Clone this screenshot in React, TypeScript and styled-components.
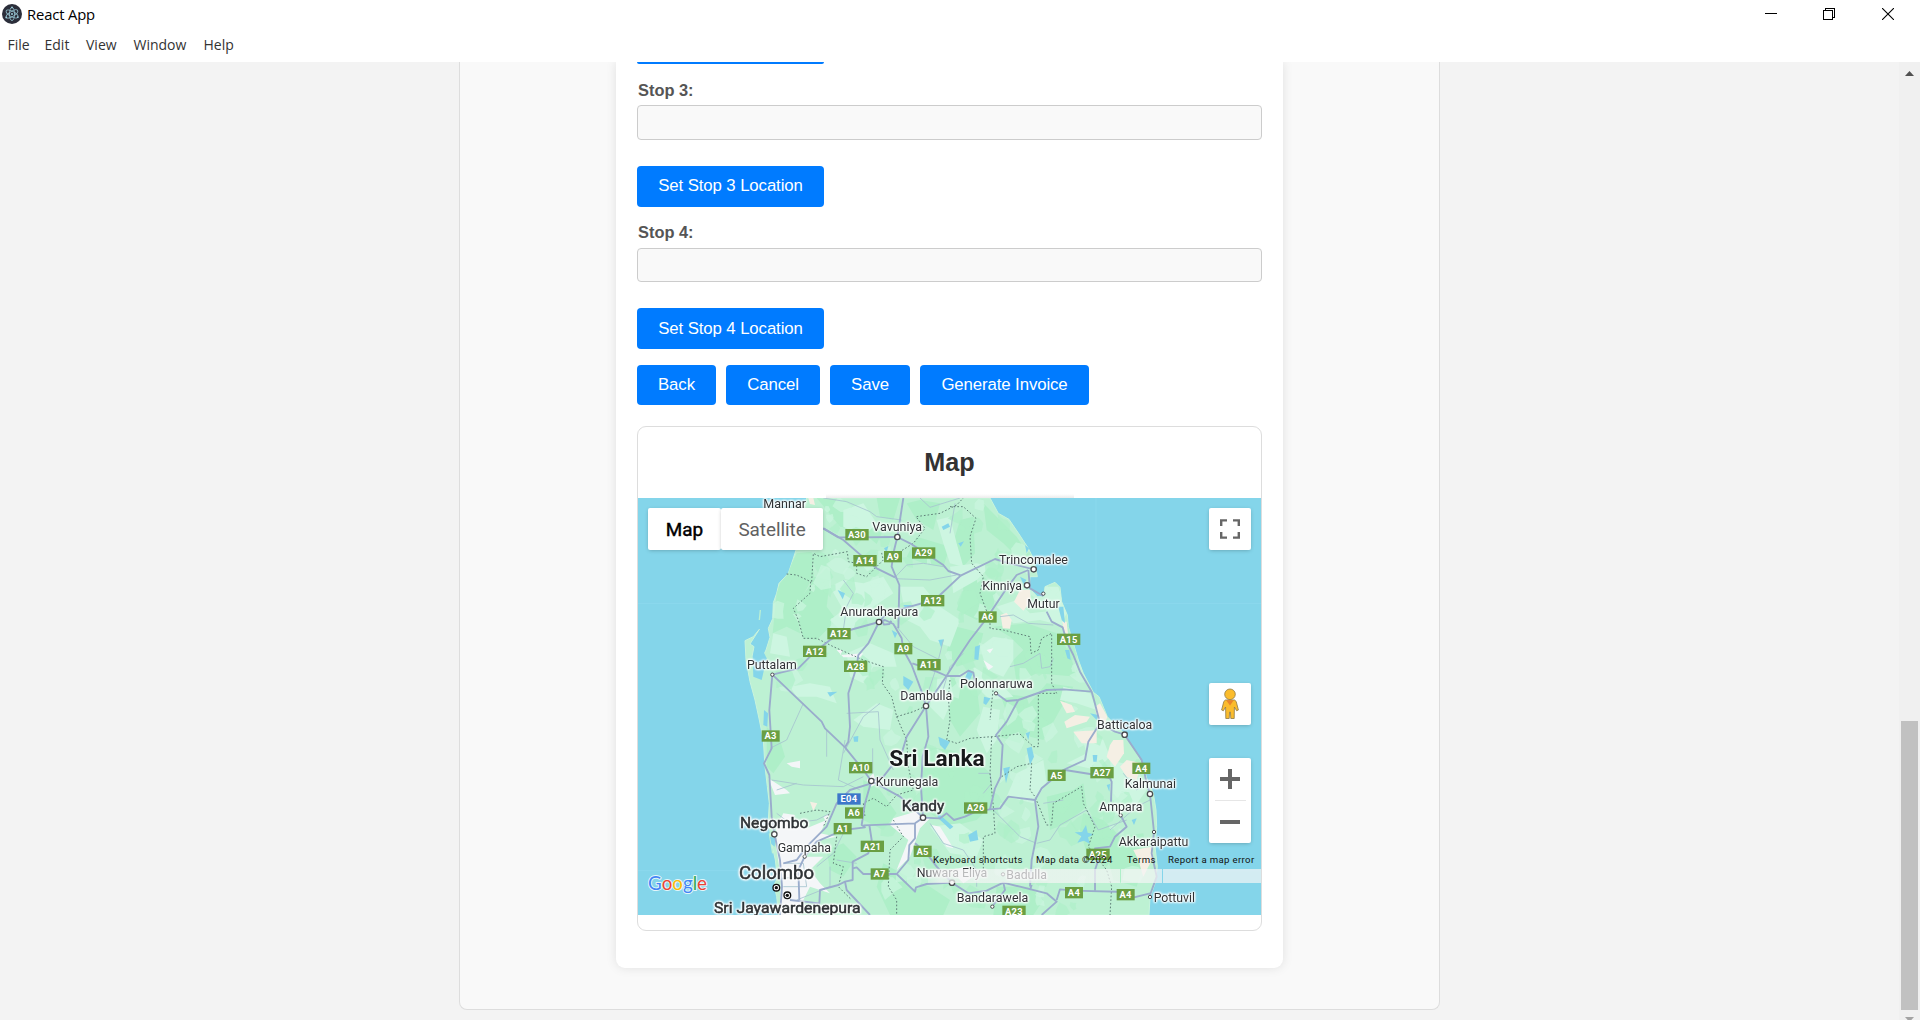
import React from "react";
import styled, { createGlobalStyle } from "styled-components";

const GlobalStyle = createGlobalStyle`
  * { box-sizing: border-box; }
  html, body { margin: 0; padding: 0; overflow: hidden; }
  body { font-family: "Liberation Sans", Arial, sans-serif; background: #fff; }
`;

/* ---------- window chrome ---------- */
const Window = styled.div`
  width: 1920px;
  height: 1020px;
  display: flex;
  flex-direction: column;
  overflow: hidden;
  background: #fff;
`;

const TitleBar = styled.header`
  height: 30px;
  display: flex;
  align-items: flex-start;
  justify-content: space-between;
  padding-left: 2px;
  font-family: "Open Sans", "Noto Sans", sans-serif;
`;

const TitleGroup = styled.div`
  display: flex;
  align-items: flex-start;
  gap: 5px;
  font-size: 14.8px;
  line-height: 28px;
  letter-spacing: -0.15px;
  color: #000;
  svg { display: block; margin-top: 4px; }
`;

const WindowButtons = styled.div`
  display: flex;
  height: 28px;
  padding-right: 3px;
`;

const WindowButton = styled.div`
  width: 58.5px;
  display: grid;
  place-items: center;
`;

const MenuBar = styled.nav`
  height: 32px;
  display: flex;
  gap: 15.5px;
  padding-left: 7.5px;
  font-family: "Open Sans", "Noto Sans", sans-serif;
  font-size: 14px;
  line-height: 29px;
  color: #333;
`;

const MenuItem = styled.span<{ $w: number }>`
  width: ${(p) => p.$w}px;
  white-space: nowrap;
`;

const Viewport = styled.div`
  flex: 1;
  min-height: 0;
  display: flex;
  background: #f3f3f3;
`;

const Page = styled.main`
  flex: 1;
  display: flex;
  justify-content: center;
  overflow: hidden;
`;

const Scrollbar = styled.aside`
  width: 21px;
  background: #f0f0f0;
  display: flex;
  flex-direction: column;
  align-items: center;
  overflow: hidden;
`;

const ScrollCap = styled.div<{ $h: number; $pad: number }>`
  height: ${(p) => p.$h}px;
  padding-top: ${(p) => p.$pad}px;
  flex: none;
  svg { display: block; }
`;

const ScrollThumb = styled.div`
  width: 17px;
  height: 289px;
  flex: none;
  background: #c1c1c1;
`;

/* ---------- form ---------- */
const Container = styled.div`
  width: 981px;
  height: 948px;
  border: 1px solid #ddd;
  border-top: 0;
  border-radius: 0 0 8px 8px;
  background: #f9f9f9;
  display: flex;
  justify-content: center;
  align-items: flex-start;
`;

const Card = styled.section`
  width: 667px;
  height: 906px;
  padding: 0 21px;
  background: #fff;
  border-radius: 0 0 9px 9px;
  box-shadow: 0 0 11px rgba(0, 0, 0, 0.1);
  display: flex;
  flex-direction: column;
  align-items: flex-start;
`;

const Button = styled.button<{ $w: number; $h?: number; $drop?: boolean }>`
  width: ${(p) => p.$w}px;
  height: ${(p) => p.$h ?? 41}px;
  flex: none;
  border: 0;
  border-radius: 4px;
  padding: 0 0 ${(p) => (p.$drop ? 0 : 2)}px;
  background: #007bff;
  color: #fff;
  font: 16.8px "Liberation Sans", Arial, sans-serif;
  letter-spacing: -0.1px;
  white-space: nowrap;
`;

const ButtonEdge = styled.div`
  width: 187px;
  height: 2px;
  flex: none;
  border-radius: 0 0 4px 4px;
  background: #007bff;
`;

const Field = styled.div<{ $top: number }>`
  width: 100%;
  margin-top: ${(p) => p.$top}px;
  display: flex;
  flex-direction: column;
`;

const Label = styled.label<{ $lh?: number }>`
  height: 26px;
  padding-left: 1px;
  font-weight: bold;
  font-size: 16.4px;
  line-height: ${(p) => p.$lh ?? 20}px;
  color: #555;
`;

const Input = styled.input<{ $h: number }>`
  width: 100%;
  height: ${(p) => p.$h}px;
  margin-bottom: 26px;
  border: 1px solid #ccc;
  border-radius: 4px;
  background: #f9f9f9;
  outline: none;
`;

const Actions = styled.div`
  display: flex;
  gap: 10px;
  margin-top: 16px;
`;

const MapCard = styled.div`
  width: 625px;
  height: 505px;
  margin-top: 21px;
  border: 1px solid #ddd;
  border-radius: 9px;
  overflow: hidden;
  display: flex;
  flex-direction: column;
`;

const MapTitle = styled.h2`
  height: 71px;
  flex: none;
  margin: 0;
  text-align: center;
  font-size: 25.2px;
  line-height: 71px;
  color: #333;
`;

const MapArea = styled.div`
  position: relative;
  width: 623px;
  height: 417px;
  overflow: hidden;
  background: #84d5ea;
  > svg { display: block; }
`;

const TitleShadow = styled.div`
  height: 4px;
  width: 248px;
  margin: -4px auto 0;
  flex: none;
  background: linear-gradient(rgba(0, 0, 0, 0), rgba(0, 0, 0, 0.08));
`;

/* ---------- controls lying over the map ---------- */
const MapControl = styled.div<{ $x: number; $y: number; $h?: number }>`
  position: absolute;
  left: ${(p) => p.$x}px;
  top: ${(p) => p.$y}px;
  width: 42px;
  height: ${(p) => p.$h ?? 42}px;
  background: #fff;
  border-radius: 2px;
  box-shadow: 0 1px 4px -1px rgba(0, 0, 0, 0.3);
  display: flex;
  flex-direction: column;
  align-items: center;
  justify-content: center;
`;

const TypeSwitch = styled.div`
  position: absolute;
  left: 10px;
  top: 10px;
  display: flex;
`;

const TypeButton = styled.div<{ $w: number; $active?: boolean }>`
  width: ${(p) => p.$w}px;
  height: 42px;
  background: #fff;
  border-radius: 2px;
  box-shadow: 0 1px 4px -1px rgba(0, 0, 0, 0.3);
  text-align: center;
  font: 18.9px/43px Roboto, sans-serif;
  letter-spacing: ${(p) => (p.$active ? 0.1 : -0.05)}px;
  -webkit-text-stroke: ${(p) => (p.$active ? "0.45px #000" : "0")};
  color: ${(p) => (p.$active ? "#000" : "#616161")};
`;

const ZoomCell = styled.div`
  height: 42px;
  display: grid;
  place-items: center;
`;

const ZoomDivider = styled.div`
  width: 31px;
  height: 1px;
  background: #e6e6e6;
`;

const FooterBand = styled.div`
  position: absolute;
  right: 0;
  top: 371px;
  height: 14px;
  display: flex;
  gap: 1px;
`;

const BandPart = styled.div<{ $w: number; $fade?: boolean }>`
  width: ${(p) => p.$w}px;
  background: ${(p) =>
    p.$fade
      ? "linear-gradient(90deg, rgba(245,245,245,.35), rgba(245,245,245,.7) 12px)"
      : "rgba(245,245,245,.7)"};
`;

const Credits = styled.div`
  position: absolute;
  right: 6px;
  top: 355px;
  display: flex;
  gap: 13px;
  font: 9.6px/14px Roboto, sans-serif;
  color: #111;
`;

const Credit = styled.span<{ $w: number }>`
  width: ${(p) => p.$w}px;
  white-space: nowrap;
  letter-spacing: 0.36px;
`;

/* ---------- map data, in a 1869 x 1251 chart space ---------- */
const LAND =
  "M530 234 L522 262 L498 390 L490 415 L475 460 L447 490 L440 520 L430 548 L428 596 L415 625 L420 652 L408 690 L398 712 L380 722 L366 710 L372 680 L360 672 L388 628 L370 650 L345 662 L348 720 L360 785 L375 840 L388 900 L400 960 L405 1040 L412 1100 L418 1150 L415 1200 L425 1270 L436 1320 L442 1375 L432 1395 L440 1430 L446 1485 L1557 1485 L1560 1432 L1575 1390 L1582 1340 L1575 1280 L1580 1220 L1578 1170 L1570 1120 L1552 1080 L1540 1040 L1520 1000 L1490 945 L1465 925 L1432 890 L1407 830 L1390 817 L1360 760 L1345 720 L1330 670 L1315 620 L1312 585 L1295 545 L1290 502 L1275 487 L1245 500 L1242 530 L1222 530 L1198 505 L1200 470 L1222 470 L1212 420 L1195 385 L1167 342 L1137 298 L1105 280 L1080 234 Z";

const DARK = [
  "M560 234 L640 240 L700 285 L760 330 L740 372 L690 330 L630 320 L590 270Z",
  "M500 400 L545 395 L552 470 L600 480 L590 560 L620 600 L560 660 L520 655 L505 600 L490 560 L530 510 L545 490 L470 462Z",
  "M450 490 L475 460 L540 488 L500 560 L510 640 L470 620 L428 640 L440 520Z",
  "M740 234 L810 234 L790 300 L750 290Z",
  "M830 250 L870 240 L930 250 L910 330 L860 300Z",
  "M990 300 L1030 290 L1035 400 L1000 440 L960 400Z",
  "M1060 250 L1110 300 L1160 350 L1200 410 L1150 400 L1120 370 L1070 330Z",
  "M860 350 L960 380 L940 440 L880 430 L830 410Z",
  "M990 460 L1060 470 L1100 500 L1090 560 L1040 600 L980 570 L1000 510Z",
  "M1090 620 L1190 610 L1280 640 L1320 700 L1340 770 L1220 760 L1160 790 L1150 720 L1180 690 L1140 650Z",
  "M980 620 L1060 640 L1040 720 L980 740 L950 690Z",
  "M960 770 L1040 800 L1050 880 L990 950 L960 900Z",
  "M880 980 L960 990 L1030 1010 L1080 1060 L1090 1150 L1040 1200 L960 1220 L900 1180 L870 1120 L880 1050Z",
  "M1110 820 L1190 830 L1210 900 L1170 970 L1110 950 L1130 880Z",
  "M1190 860 L1250 790 L1330 800 L1290 870 L1240 960 L1200 950Z",
  "M1250 1130 L1330 1110 L1360 1090 L1370 1160 L1310 1210 L1260 1230Z",
  "M1360 1180 L1420 1200 L1480 1260 L1430 1340 L1370 1300 L1350 1230Z",
  "M1380 1260 L1540 1240 L1550 1300 L1520 1400 L1450 1380 L1430 1300Z",
  "M1100 1400 L1200 1400 L1240 1440 L1210 1485 L1090 1485Z",
  "M760 1330 L850 1380 L900 1400 L960 1440 L940 1485 L780 1485 L740 1400Z",
  "M410 920 L450 960 L465 1010 L430 1060 L410 1040Z",
  "M700 1080 L750 1110 L800 1180 L760 1230 L700 1200Z",
  "M590 1290 L640 1270 L680 1310 L640 1370 L600 1350Z",
];

const LIGHT = [
  "M640 270 L700 250 L740 310 L700 350 L640 320Z",
  "M600 500 L640 480 L700 490 L760 470 L790 520 L730 560 L690 620 L640 640 L600 600 L640 570Z",
  "M810 500 L880 500 L930 560 L990 600 L960 680 L900 660 L870 620 L830 600Z",
  "M920 300 L960 290 L980 370 L1000 440 L960 430 L940 370Z",
  "M960 440 L1040 430 L1080 440 L1040 480 L970 520Z",
  "M650 700 L720 670 L790 700 L800 740 L730 740 L700 790 L660 770Z",
  "M480 800 L540 790 L600 800 L620 850 L560 830 L500 830Z",
  "M670 900 L740 850 L790 870 L780 930 L700 920Z",
  "M1050 680 L1090 650 L1150 660 L1150 720 L1120 770 L1070 750Z",
  "M1100 560 L1160 540 L1200 580 L1290 570 L1310 620 L1230 600 L1150 610Z",
  "M1240 500 L1285 500 L1310 580 L1290 620 L1250 580Z",
  "M1030 740 L1110 790 L1150 830 L1080 840 L1040 800Z",
  "M1300 800 L1380 820 L1400 870 L1340 850 L1290 840Z",
  "M1350 930 L1420 960 L1440 1010 L1400 1050 L1310 1030 L1370 1000Z",
  "M1160 1060 L1240 1020 L1250 1090 L1210 1150 L1130 1130Z",
  "M910 780 L960 770 L970 830 L940 900 L900 860Z",
  "M1440 1020 L1520 1040 L1550 1110 L1500 1180 L1450 1120Z",
  "M1060 860 L1110 870 L1100 960 L1070 1000 L1040 930Z",
  "M900 1220 L990 1210 L1060 1260 L1040 1310 L960 1300Z",
  "M430 640 L470 650 L480 710 L420 700Z",
];

const SAND = [
  "M1290 842 L1325 855 L1335 875 L1310 880Z",
  "M1303 905 L1335 885 L1380 890 L1370 905 L1310 925Z",
  "M1330 935 L1400 930 L1400 970 L1355 970Z",
  "M1440 975 L1450 960 L1480 960 L1482 1000 L1455 1040 L1430 1010Z",
  "M1470 1040 L1490 1020 L1535 1030 L1520 1080 L1490 1070Z",
  "M1395 860 L1410 850 L1432 890 L1425 910 L1400 890Z",
  "M1152 545 L1170 510 L1200 510 L1202 545 L1180 572Z",
  "M1112 585 L1130 578 L1145 600 L1140 626 L1118 625Z",
  "M1297 605 L1310 605 L1315 650 L1300 630Z",
  "M1510 1290 L1565 1280 L1570 1310 L1540 1370 L1525 1320Z",
  "M535 234 L550 234 L555 255 L540 252Z",
  "M540 1145 L562 1150 L550 1172Z",
];

const URBAN = [
  "M438 1225 L460 1180 L495 1185 L475 1215 L530 1225 L590 1200 L570 1240 L620 1250 L570 1260 L520 1310 L580 1310 L540 1350 L570 1390 L600 1420 L540 1400 L520 1440 L500 1485 L450 1485 L452 1370 L440 1290Z",
  "M790 1195 L855 1175 L900 1195 L870 1225 L840 1310 L800 1350 L835 1260 L780 1215Z",
  "M415 1075 L470 1110 L480 1120 L435 1125Z",
  "M710 1080 L730 1060 L740 1090 L725 1100Z",
  "M470 1030 L510 1022 L510 1045 L485 1040Z",
  "M580 1190 L600 1180 L590 1210Z",
  "M680 1180 L700 1170 L695 1200Z",
  "M620 690 L640 690 L630 705 L700 700 L690 712 L640 712Z",
  "M905 1215 L930 1220 L970 1285 L950 1280Z",
  "M1060 720 L1090 740 L1075 750Z M1070 690 L1090 685 L1080 700Z",
  "M960 1350 L1010 1340 L1030 1370 L1000 1390Z",
];

const WATER = [
  "M368 712 L398 690 L410 715 L395 780 L370 770Z",
  "M402 870 L414 880 L412 920 L400 915Z",
  "M623 510 L645 520 L638 538 Z",
  "M820 555 L845 555 L842 562 L826 564Z",
  "M785 630 L802 640 L795 655Z",
  "M925 660 L942 658 L934 684Z",
  "M820 768 L850 785 L835 810 L820 795Z",
  "M592 817 L622 815 L600 830Z",
  "M670 950 L685 948 L684 965 L672 965Z",
  "M925 950 L960 965 L945 990 L930 975Z",
  "M935 320 L955 310 L960 320 L940 330Z",
  "M985 370 L1002 364 L992 380Z",
  "M762 385 L775 378 L770 398Z",
  "M1062 830 L1082 835 L1068 855 L1060 850Z",
  "M1035 680 L1050 675 L1045 720 L1033 718Z",
  "M1015 750 L1030 755 L1020 780 L1005 775Z",
  "M1187 940 L1200 935 L1195 960Z",
  "M1190 985 L1205 980 L1212 1010 L1200 1035 L1195 1010Z",
  "M1120 1045 L1140 1040 L1128 1090Z",
  "M1430 1095 L1440 1092 L1438 1115Z",
  "M1388 1005 L1402 1005 L1400 1025 L1390 1025Z",
  "M1334 1237 L1356 1236 L1368 1215 L1373 1238 L1392 1243 L1374 1252 L1380 1272 L1362 1262 L1342 1268 L1354 1249Z",
  "M1015 1245 L1040 1230 L1045 1260 L1020 1265Z",
  "M920 1175 L970 1220 L960 1228 L925 1195Z",
  "M1170 470 L1190 480 L1180 492Z",
  "M1485 950 L1500 945 L1530 1000 L1520 1000Z",
  "M1380 880 L1405 885 L1400 900Z",
  "M420 1250 L436 1255 L434 1280 L424 1272Z",
  "M1185 375 L1197 385 L1190 400Z",
  "M1285 560 L1300 560 L1305 610 L1295 600Z",
  "M1305 690 L1318 690 L1322 720 L1312 715Z",
  "M1505 1200 L1520 1195 L1512 1215Z",
];

const ROADS = [
  "M580 325 L625 352 L680 352 L802 351",
  "M820 234 L802 351 L790 400 L785 440 L808 495 L805 625",
  "M580 325 L640 360 L700 412 L740 445 L795 472",
  "M802 351 L840 370 L880 395 L940 435 L955 453 L992 466",
  "M992 467 L930 525 L900 543 L830 563 L770 580 L747 606",
  "M992 467 L1095 417 L1120 425 L1211 448",
  "M1195 450 L1160 465 L1130 505 L1070 595 L1020 660 L980 720 L945 775 L888 858",
  "M747 606 L765 600 L790 612 L815 655 L820 690 L845 735 L875 815 L888 858",
  "M755 600 L762 614 L778 612 L784 602",
  "M847 730 L920 755 L950 768 L990 768 L1015 752 L1030 758 L1035 785",
  "M1098 820 L1130 843 L1165 840 L1250 810 L1300 808 L1385 815",
  "M1195 450 L1200 505 L1240 528 M1250 575 L1265 605 L1298 622 L1310 665 L1330 705 L1350 755 L1385 815 L1392 840 L1410 910",
  "M747 606 L660 630 L600 660 L555 695 L505 745 L427 764",
  "M747 606 L715 670 L685 705 L680 740 L655 820 L660 920 L655 965 L645 982",
  "M427 764 L575 905 L585 925 L645 982 L700 1050 L724 1083",
  "M427 764 L418 870 L425 985 L402 1030 L418 1065 L425 1190 L433 1240 L450 1320 L456 1400 L450 1485",
  "M724 1083 L760 1070 L815 1000 L830 950 L888 858 L895 950 L878 1010 L873 1100 L879 1193",
  "M724 1083 L810 1130 L850 1165 L879 1193",
  "M724 1090 L660 1110 L620 1150 L590 1220 L530 1280 L500 1320 L460 1330",
  "M724 1083 L705 1150 L695 1215 L705 1222 L640 1230 L560 1265 L524 1310 L505 1350 L508 1440",
  "M700 1216 L855 1210 L879 1193 M855 1210 L855 1255 L838 1275 L835 1320 L800 1362",
  "M718 1215 L725 1260 L715 1300 L668 1325 L668 1380 L645 1385 L625 1395 L570 1410 L568 1450 L480 1440",
  "M645 1385 L650 1410 L720 1485",
  "M668 1345 L680 1342 L700 1362 L800 1362 L855 1415 L858 1402 L890 1392 L966 1388 L1015 1420 L1070 1412 L1120 1388 L1170 1400 L1250 1420 L1280 1445 L1235 1485",
  "M855 1270 L890 1300 L920 1340 L966 1388",
  "M1280 1440 L1290 1408 L1332 1412 L1487 1416 M1500 1435 L1560 1420",
  "M1120 1388 L1125 1410 L1090 1455 M1205 1395 L1200 1410",
  "M879 1193 L930 1195 L950 1180 L972 1200 L1005 1190 L1037 1175 L1080 1168 L1110 1165 L1135 1130 L1215 1140 L1235 1105 L1300 1050 L1365 1020 L1375 965 L1410 910",
  "M1305 1050 L1380 1062 L1440 1075 L1445 1085 L1443 1145",
  "M1080 1168 L1095 1105 L1112 1070 L1118 975 L1098 945 L1130 905 L1165 840",
  "M1215 1140 L1225 1220 L1205 1320 L1200 1400",
  "M1410 910 L1455 935 L1484 944 L1535 1020 L1550 1090 L1560 1122 L1572 1236 L1565 1300 L1580 1370 L1560 1425",
  "M1472 1186 L1490 1220 L1455 1250 L1440 1280 L1395 1285 L1405 1320 L1395 1350 L1395 1412",
];

const MINOR = [
  "M580 234 L650 245 L720 275 L740 290 L815 300",
  "M795 472 L830 435 L880 430 L940 440 L955 453 M795 476 L900 480 L980 465",
  "M640 480 L670 520 L650 560 L640 630",
  "M800 620 L850 680 L930 720",
  "M940 660 L920 740 L890 830",
  "M520 850 L470 960 L420 985",
  "M590 930 L590 1010 M728 985 L728 1060",
  "M425 1080 L520 1095 L640 1100 L700 1070",
  "M645 960 L625 1080 L690 1110",
  "M650 880 L745 875 L750 960 L790 1050",
  "M440 1110 L500 1090 M440 1180 L480 1210 L560 1200 L600 1180",
  "M960 340 L975 250 M870 234 L900 262 L990 234",
  "M1110 590 L1150 585 L1195 610 L1270 615",
  "M1140 740 L1180 730 L1230 700 L1235 745 L1260 740 L1270 715",
  "M1220 1270 L1260 1260 L1290 1215 L1370 1170 L1405 1230 L1490 1200",
  "M1090 1170 L1150 1230 L1170 1250 L1215 1268",
  "M1045 1060 L1080 1060 L1085 1090 L1060 1120",
  "M900 1210 L940 1270 L1000 1290 L1040 1350 L1040 1400",
  "M750 850 L700 890 L640 1000",
  "M460 1330 L520 1330 L530 1400 L460 1400 M456 1375 L510 1370 M500 1440 L600 1400 L600 1340",
  "M640 1240 L610 1300 L560 1340 M680 1330 L620 1320",
  "M1560 1140 L1520 1160 L1440 1230",
  "M1540 1095 L1520 1110 L1480 1060",
  "M1240 1150 L1300 1140 M1000 700 L960 740 L930 840",
];

const BORDERS = [
  "M470 462 L500 465 L542 485 L540 520 L490 565 L505 600 L520 655 L560 655 L610 680 L700 720 L760 740 L757 790 L785 830 L800 890 L850 875 L888 858",
  "M545 485 L550 400 L570 410 L652 395 L655 425 L680 430 L680 460 L710 470 L760 420 L755 400 L810 395 L850 370 L885 325 L858 290 L930 280 L980 255 L1000 234",
  "M960 260 L1000 260 L1038 295 L1020 350 L1025 430 L1060 470 L1050 520 L1080 600 L1080 625 L1120 630 L1200 650 L1203 700 L1225 690 L1235 655 L1265 640 L1265 790 L1280 820",
  "M800 890 L830 960 L835 1040 L850 1110 L800 1125 L770 1160 L730 1135 L700 1150 L705 1190",
  "M960 900 L950 960 L980 970 L1020 955 L1085 950 L1170 942 L1210 980 L1225 980 L1225 820 L1280 820",
  "M1085 950 L1080 1060 L1090 1160 L1095 1240 L1060 1250 L1060 1370",
  "M1115 1070 L1160 1040 L1205 1030 L1200 1110 L1215 1130 L1250 1215 L1265 1215 L1270 1150 L1330 1115 L1355 1100 L1360 1150 L1395 1220 L1375 1280 L1430 1350 L1445 1400 L1440 1485",
  "M620 1250 L610 1330 L640 1340 L625 1400 L665 1440",
  "M790 1200 L820 1250 L780 1290 L775 1400 L800 1440 L800 1485",
  "M510 1180 L560 1170 L600 1175 L580 1220",
  "M960 780 L955 830 L960 900 M1090 800 L1080 900",
];

/* Small irregular vegetation facets, repeatable from a fixed seed. */
const buildFacets = () => {
  let s = 71;
  const rnd = () => {
    s = (s * 16807) % 2147483647;
    return s / 2147483647;
  };
  return Array.from({ length: 210 }, (_, i) => {
    const east = i % 5 !== 0;
    const cx = east ? 770 + rnd() * 780 : 440 + rnd() * 330;
    const cy = east ? 240 + rnd() * 1240 : 240 + rnd() * 560;
    const r = 9 + rnd() * 26;
    const n = 6 + Math.floor(rnd() * 4);
    const pts = Array.from({ length: n }, (_, k) => {
      const a = (k / n) * Math.PI * 2;
      const q = r * (0.45 + rnd() * 0.8);
      return `${(cx + Math.cos(a) * q).toFixed(0)},${(cy + Math.sin(a) * q * 1.15).toFixed(0)}`;
    }).join(" ");
    return { pts, light: rnd() > 0.5 };
  });
};
const FACETS = buildFacets();

type Place = [name: string, x1: number, x2: number, y: number, size?: number, medium?: boolean];
const PLACES: Place[] = [
  ["Mannar", 400, 528, 263],
  ["Vavuniya", 727, 876, 334],
  ["Anuradhapura", 631, 865, 589],
  ["Puttalam", 351, 500, 747],
  ["Trincomalee", 1107, 1314, 431],
  ["Kinniya", 1057, 1176, 510],
  ["Mutur", 1192, 1289, 564],
  ["Dambulla", 811, 967, 840],
  ["Polonnaruwa", 990, 1208, 805],
  ["Kurunegala", 737, 925, 1097],
  ["Kandy", 815, 943, 1172, 46, true],
  ["Negombo", 330, 535, 1223, 45, true],
  ["Gampaha", 443, 603, 1297],
  ["Colombo", 327, 552, 1377, 53, true],
  ["Sri Jayawardenepura", 252, 692, 1479, 45, true],
  ["Nuwara Eliya", 860, 1072, 1371],
  ["Badulla", 1129, 1251, 1376],
  ["Bandarawela", 980, 1195, 1445],
  ["Batticaloa", 1401, 1567, 926],
  ["Kalmunai", 1484, 1638, 1104],
  ["Ampara", 1408, 1537, 1173],
  ["Akkaraipattu", 1466, 1675, 1277],
  ["Pottuvil", 1571, 1695, 1445],
];

const DOTS: [number, number, number][] = [
  [802, 351, 8], [747, 606, 8], [427, 764, 5], [1211, 448, 8], [1191, 496, 8],
  [1240, 521, 5], [888, 858, 8], [1098, 820, 5], [724, 1083, 8], [879, 1193, 8],
  [433, 1243, 8], [524, 1310, 5], [966, 1388, 8], [1119, 1363, 5], [1087, 1460, 5],
  [1484, 944, 8], [1560, 1122, 8], [1472, 1186, 5], [1572, 1236, 5], [1560, 1431, 5],
];

const SHIELDS: [string, number, number][] = [
  ["A30", 681, 344], ["A14", 705, 422], ["A9", 789, 410], ["A29", 881, 399],
  ["A12", 908, 542], ["A12", 627, 641], ["A12", 554, 694], ["A9", 820, 686],
  ["A28", 677, 739], ["A11", 897, 734], ["A6", 1073, 591], ["A15", 1316, 658],
  ["A3", 422, 948], ["A10", 692, 1043], ["E04", 657, 1137], ["A6", 672, 1179],
  ["A1", 638, 1226], ["A21", 727, 1279], ["A5", 878, 1294], ["A7", 749, 1362],
  ["A5", 1280, 1066], ["A27", 1416, 1058], ["A4", 1534, 1045], ["A26", 1037, 1164],
  ["A25", 1404, 1303], ["A4", 1332, 1418], ["A4", 1487, 1424], ["A23", 1152, 1474],
];

const PlaceText = styled.text<{ $medium?: boolean }>`
  font-family: Roboto, sans-serif;
  fill: #2f3336;
  stroke: #2f3336;
  stroke-width: ${(p) => (p.$medium ? 1.5 : 0)}px;
  filter: drop-shadow(0 0 2.5px #fff) drop-shadow(0 0 2.5px #fff) drop-shadow(0 0 2px #fff);
`;

const CountryText = styled(PlaceText)`
  fill: #17191b;
  stroke-width: 0;
  font-weight: 700;
`;

const ShieldText = styled.text`
  font: 700 28px Roboto, sans-serif;
  letter-spacing: 1px;
  text-anchor: middle;
  fill: #fff;
`;

const LogoText = styled.text`
  font: 400 58px Lato, Roboto, sans-serif;
  paint-order: stroke;
  stroke: rgba(255, 255, 255, 0.8);
  stroke-width: 6px;
  stroke-linejoin: round;
`;

const SriLankaMap = () => (
  <svg width="623" height="417" viewBox="24 234 1869 1251">
    <defs>
      <clipPath id="land"><path d={LAND} /></clipPath>
    </defs>
    <rect x="24" y="234" width="1869" height="1251" fill="#84d5ea" />
    <path d="M24 550H1893M24 1352H1893M1398 234V1485" stroke="#90dbee" strokeWidth="2" />
    <path d="M391 570 L388 600M418 1240 L428 1300" stroke="#bdf1d3" strokeWidth="4" />
    <path d={LAND} fill="#bdf1d3" stroke="#c9f4dc" strokeWidth="3" />
    <g clipPath="url(#land)">
      {DARK.map((d) => <path key={d} d={d} fill="#aeefc8" />)}
      {LIGHT.map((d) => <path key={d} d={d} fill="#cdf6e1" />)}
      {FACETS.map((f, i) => (
        <polygon key={i} points={f.pts} fill={f.light ? "#cdf6e1" : "#aeefc8"} opacity={0.65} />
      ))}
      {SAND.map((d) => <path key={d} d={d} fill="#f5efe4" />)}
      {URBAN.map((d) => <path key={d} d={d} fill="#f4f6f8" />)}
    </g>
    {WATER.map((d) => <path key={d} d={d} fill="#84d5ea" />)}
    <g fill="none" strokeLinejoin="round">
      {MINOR.map((d) => <path key={d} d={d} stroke="#a7c5cf" strokeWidth="2.6" />)}
      {BORDERS.map((d) => (
        <path key={d} d={d} stroke="#5f7f78" strokeWidth="3" strokeDasharray="5 6" />
      ))}
      {ROADS.map((d) => <path key={d} d={d} stroke="#9aaccc" strokeWidth="5.6" />)}
    </g>
    {SHIELDS.map(([t, x, y], i) => {
      const w = t.length > 2 ? 70 : 54;
      return (
        <g key={i}>
          <rect x={x - w / 2} y={y - 17} width={w} height="34" fill={t[0] === "E" ? "#3d77c9" : "#6a9f43"} />
          <ShieldText x={x} y={y + 10}>{t}</ShieldText>
        </g>
      );
    })}
    {DOTS.map(([x, y, r]) => (
      <circle key={`${x}-${y}`} cx={x} cy={y} r={r} fill="#fff" stroke="#4a4d50" strokeWidth={r > 6 ? 4 : 3} />
    ))}
    {[[439, 1403], [472, 1426]].map(([x, y]) => (
      <g key={x}>
        <circle cx={x} cy={y} r="10" fill="#fff" stroke="#111" strokeWidth="4" />
        <circle cx={x} cy={y} r="5" fill="#111" />
      </g>
    ))}
    {PLACES.map(([name, x1, x2, y, size = 39, medium]) => (
      <PlaceText
        key={name} x={x1} y={y} fontSize={size} $medium={medium}
        textLength={x2 - x1} lengthAdjust="spacingAndGlyphs"
      >
        {name}
      </PlaceText>
    ))}
    <CountryText x={778} y={1037} fontSize={66} textLength={286} lengthAdjust="spacingAndGlyphs">
      Sri Lanka
    </CountryText>
    <LogoText x={54} y={1411} textLength={177} lengthAdjust="spacingAndGlyphs">
      <tspan fill="#4285f4">G</tspan>
      <tspan fill="#ea4335">o</tspan>
      <tspan fill="#fbbc04">o</tspan>
      <tspan fill="#4285f4">g</tspan>
      <tspan fill="#34a853">l</tspan>
      <tspan fill="#ea4335">e</tspan>
    </LogoText>
  </svg>
);

const ElectronIcon = () => (
  <svg width="20" height="20" viewBox="0 0 20 20">
    <circle cx="10" cy="10" r="10" fill="#2b2e3a" />
    <g fill="none" stroke="#8fb9c6" strokeWidth="0.9">
      <ellipse cx="10" cy="10" rx="6.6" ry="2.6" transform="rotate(28 10 10)" />
      <ellipse cx="10" cy="10" rx="6.6" ry="2.6" transform="rotate(-32 10 10)" />
      <ellipse cx="10" cy="10" rx="6.6" ry="2.6" transform="rotate(90 10 10)" />
    </g>
    <circle cx="10" cy="10" r="1" fill="#9fd0de" />
    <circle cx="4.2" cy="13.4" r="0.9" fill="#9fd0de" />
    <circle cx="15.8" cy="13.2" r="0.9" fill="#9fd0de" />
    <circle cx="10" cy="3.4" r="0.9" fill="#9fd0de" />
  </svg>
);

const Pegman = () => (
  <svg width="20" height="32" viewBox="0 0 20 32">
    <g fill="#fbbc2c" stroke="#8f7a45" strokeWidth="0.8" strokeLinejoin="round">
      <path d="M5.4 12 L14.6 12 L16.2 13.5 L18.4 22 L16.6 22.8 L14.4 19 L14.2 30.5 L10.8 30.5 L10.4 24 L9.6 24 L9.2 30.5 L5.8 30.5 L5.6 19 L3.4 22.8 L1.6 22 L3.8 13.5 Z" />
      <circle cx="10" cy="6.3" r="5.3" />
    </g>
    <path d="M6.2 12.3 H13.8 L10 17.4Z" fill="#e8842c" />
  </svg>
);

const MENU: [string, number][] = [["File", 21.5], ["Edit", 26], ["View", 32], ["Window", 54.5], ["Help", 32]];

export default function App() {
  return (
    <>
      <GlobalStyle />
      <Window>
        <TitleBar>
          <TitleGroup><ElectronIcon />React App</TitleGroup>
          <WindowButtons>
            <WindowButton>
              <svg width="12" height="12" shapeRendering="crispEdges"><path d="M0 5.5H12" stroke="#000" /></svg>
            </WindowButton>
            <WindowButton>
              <svg width="12" height="12" fill="none" stroke="#000" shapeRendering="crispEdges">
                <path d="M.5 2.5H9.5V11.5H.5ZM2.5 2.5V.5H11.5V9.5H9.5" />
              </svg>
            </WindowButton>
            <WindowButton>
              <svg width="12" height="12" stroke="#000" strokeWidth="1.1"><path d="M0 0L12 12M12 0L0 12" /></svg>
            </WindowButton>
          </WindowButtons>
        </TitleBar>
        <MenuBar>
          {MENU.map(([t, w]) => <MenuItem key={t} $w={w}>{t}</MenuItem>)}
        </MenuBar>
        <Viewport>
          <Page>
            <Container>
              <Card>
                <ButtonEdge />
                <Field $top={15}>
                  <Label $lh={22}>Stop 3:</Label>
                  <Input $h={35} readOnly />
                </Field>
                <Button $w={187}>Set Stop 3 Location</Button>
                <Field $top={15}>
                  <Label>Stop 4:</Label>
                  <Input $h={34} readOnly />
                </Field>
                <Button $w={187} $drop>Set Stop 4 Location</Button>
                <Actions>
                  <Button $w={79} $h={40} $drop>Back</Button>
                  <Button $w={94} $h={40} $drop>Cancel</Button>
                  <Button $w={80} $h={40} $drop>Save</Button>
                  <Button $w={169} $h={40} $drop>Generate Invoice</Button>
                </Actions>
                <MapCard>
                  <MapTitle>Map</MapTitle>
                  <TitleShadow />
                  <MapArea>
                    <SriLankaMap />
                    <FooterBand>
                      <BandPart $w={192} $fade />
                      <BandPart $w={41} />
                      <BandPart $w={98} />
                    </FooterBand>
                    <Credits>
                      <Credit $w={90}>Keyboard shortcuts</Credit>
                      <Credit $w={78}>Map data ©2024</Credit>
                      <Credit $w={28}>Terms</Credit>
                      <Credit $w={87}>Report a map error</Credit>
                    </Credits>
                    <TypeSwitch>
                      <TypeButton $w={73} $active>Map</TypeButton>
                      <TypeButton $w={102}>Satellite</TypeButton>
                    </TypeSwitch>
                    <MapControl $x={571} $y={10}>
                      <svg width="20" height="20" fill="none" stroke="#666" strokeWidth="2.4">
                        <path d="M1.2 7V1.4H7M13 1.4H18.8V7M18.8 13V18.6H13M7 18.6H1.2V13" />
                      </svg>
                    </MapControl>
                    <MapControl $x={571} $y={185}><Pegman /></MapControl>
                    <MapControl $x={571} $y={260} $h={85}>
                      <ZoomCell>
                        <svg width="20" height="20" stroke="#666" strokeWidth="4"><path d="M0 10H20M10 0V20" /></svg>
                      </ZoomCell>
                      <ZoomDivider />
                      <ZoomCell>
                        <svg width="20" height="20" stroke="#666" strokeWidth="4"><path d="M0 10H20" /></svg>
                      </ZoomCell>
                    </MapControl>
                  </MapArea>
                </MapCard>
              </Card>
            </Container>
          </Page>
          <Scrollbar>
            <ScrollCap $h={659} $pad={9}>
              <svg width="9" height="5"><path d="M0 5L4.5 0L9 5Z" fill="#505050" /></svg>
            </ScrollCap>
            <ScrollThumb />
            <ScrollCap $h={10} $pad={7}>
              <svg width="9" height="5"><path d="M0 0L4.5 5L9 0Z" fill="#a3a3a3" /></svg>
            </ScrollCap>
          </Scrollbar>
        </Viewport>
      </Window>
    </>
  );
}
